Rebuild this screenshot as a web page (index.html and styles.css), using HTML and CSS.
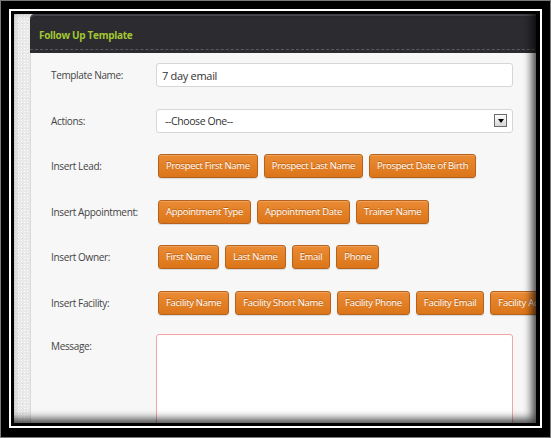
FILE: index.html
```html
<!DOCTYPE html>
<html>
<head>
<meta charset="utf-8">
<link rel="stylesheet" href="styles.css">
</head>
<body>
<div class="frame">
  <div class="mat">
    <div class="screen">
      <div class="panel">
        <div class="panel-head">
          <div class="title-bar"><h2 class="title">Follow Up Template</h2></div>
        </div>
        <div class="panel-body">
          <div class="row">
            <label class="lbl">Template Name:</label>
            <div class="ctl"><input class="field" type="text" value="7 day email"></div>
          </div>
          <div class="row">
            <label class="lbl">Actions:</label>
            <div class="ctl">
              <div class="field select"><span>--Choose One--</span><span class="arrow"></span></div>
            </div>
          </div>
          <div class="row">
            <label class="lbl">Insert Lead:</label>
            <div class="ctl btns">
              <span class="btn">Prospect First Name</span>
              <span class="btn">Prospect Last Name</span>
              <span class="btn">Prospect Date of Birth</span>
            </div>
          </div>
          <div class="row">
            <label class="lbl">Insert Appointment:</label>
            <div class="ctl btns">
              <span class="btn">Appointment Type</span>
              <span class="btn">Appointment Date</span>
              <span class="btn">Trainer Name</span>
            </div>
          </div>
          <div class="row">
            <label class="lbl">Insert Owner:</label>
            <div class="ctl btns">
              <span class="btn">First Name</span>
              <span class="btn">Last Name</span>
              <span class="btn">Email</span>
              <span class="btn">Phone</span>
            </div>
          </div>
          <div class="row">
            <label class="lbl">Insert Facility:</label>
            <div class="ctl btns">
              <span class="btn">Facility Name</span>
              <span class="btn">Facility Short Name</span>
              <span class="btn">Facility Phone</span>
              <span class="btn">Facility Email</span>
              <span class="btn">Facility Address</span>
            </div>
          </div>
          <div class="row row-msg">
            <label class="lbl">Message:</label>
            <div class="ctl"><textarea class="message"></textarea></div>
          </div>
        </div>
      </div>
      <div class="vignette"></div>
    </div>
  </div>
</div>
</body>
</html>
```

FILE: styles.css
```css
html, body {
  margin: 0;
  padding: 0;
  background: #000;
}

.frame {
  width: 551px;
  height: 438px;
  box-sizing: border-box;
  border: 1px solid #7a7a7a;
  background: #000;
  padding: 8px 8px 9px 8px;
}

.mat {
  height: 100%;
  box-sizing: border-box;
  border: 2px solid #fff;
  background: #000;
  padding: 3px 4px 3px 3px;
}

.screen {
  position: relative;
  width: 522px;
  height: 409px;
  overflow: hidden;
  box-sizing: border-box;
  padding-left: 16px;
  background-color: #e9e9e9;
  background-image:
    radial-gradient(circle, #fdfdfd 0.6px, transparent 1px),
    radial-gradient(circle, #d6d6d6 0.5px, transparent 0.9px);
  background-size: 3px 3px, 5px 5px;
  background-position: 0 0, 1px 2px;
  font-family: "Open Sans", "Noto Sans", sans-serif;
}

.panel {
  width: 530px;
}

.panel-head {
  height: 39px;
  box-sizing: border-box;
  padding-bottom: 3px;
  background: #2b2b30;
  border-radius: 5px 5px 0 0;
  box-shadow: inset 0 2px 0 #4a4a50;
}

.title-bar {
  height: 36px;
  box-sizing: border-box;
  padding-top: 14px;
  border-bottom: 1px dashed #5a5a60;
}

.title {
  margin: 0;
  padding-left: 9px;
  font-size: 10px;
  line-height: 14px;
  font-weight: bold;
  letter-spacing: -0.3px;
  color: #a3c732;
}

.panel-body {
  background: #f7f7f7;
  border-left: 1px solid #d9d9d9;
  padding: 10px 0 0 20px;
  height: 360px;
}

.row {
  display: flex;
  align-items: flex-start;
  margin-bottom: 21.5px;
}

.row-msg {
  margin-top: -2px;
}

.lbl {
  width: 105px;
  flex-shrink: 0;
  font-size: 10px;
  line-height: 24px;
  letter-spacing: -0.35px;
  color: #444;
}

.ctl {
  width: 357px;
  flex-shrink: 0;
}

.field {
  display: block;
  width: 357px;
  height: 24px;
  box-sizing: border-box;
  margin: 0;
  border: 1px solid #d6d6d6;
  border-radius: 3px;
  background: #fff;
  padding: 0 5px;
  font-family: "Open Sans", "Noto Sans", sans-serif;
  font-size: 11px;
  letter-spacing: -0.3px;
  color: #333;
  outline: none;
}

.select {
  display: flex;
  align-items: center;
  justify-content: space-between;
  padding: 0 5px 0 8px;
  line-height: 22px;
  font-size: 10.5px;
  letter-spacing: -0.4px;
}

.arrow {
  width: 13px;
  height: 13px;
  box-sizing: border-box;
  border: 1px solid #6a6a6a;
  background: linear-gradient(#fdfdfd, #d6d6d6);
  display: flex;
  align-items: center;
  justify-content: center;
}

.arrow::after {
  content: "";
  width: 0;
  height: 0;
  border-left: 3.5px solid transparent;
  border-right: 3.5px solid transparent;
  border-top: 4px solid #000;
}

.btns {
  display: flex;
  flex-wrap: nowrap;
  gap: 6px;
  padding-left: 2px;
  box-sizing: border-box;
}

.btn {
  flex-shrink: 0;
  height: 24px;
  box-sizing: border-box;
  padding: 0 7px;
  border: 1px solid #b4621c;
  border-radius: 3px;
  background: linear-gradient(#ea8b34, #dc7519);
  box-shadow: inset 0 1px 0 rgba(255, 255, 255, 0.2), 0 1px 1px rgba(0, 0, 0, 0.12);
  color: #fff;
  font-size: 9.5px;
  line-height: 22px;
  letter-spacing: -0.3px;
  white-space: nowrap;
  text-shadow: 0 -1px 0 rgba(120, 50, 0, 0.45);
}

.message {
  display: block;
  width: 357px;
  height: 120px;
  box-sizing: border-box;
  margin: 0;
  border: 1px solid #f2a4a9;
  border-radius: 3px;
  background: #fff;
  resize: none;
  outline: none;
}

.vignette {
  position: absolute;
  inset: 0;
  pointer-events: none;
  box-shadow: inset -4px -4px 9px rgba(0, 0, 0, 0.75);
}
```
